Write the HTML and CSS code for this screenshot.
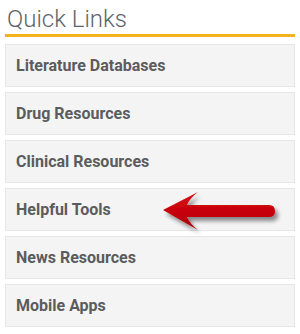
FILE: index.html
```html
<!DOCTYPE html>
<html>
<head>
<meta charset="utf-8">
<link rel="stylesheet" href="styles.css">
</head>
<body>
<div class="panel">
  <h2 class="title">Quick Links</h2>
  <ul class="links">
    <li class="link">Literature Databases</li>
    <li class="link">Drug Resources</li>
    <li class="link">Clinical Resources</li>
    <li class="link has-arrow">Helpful Tools
      <svg class="arrow" width="130" height="52" viewBox="0 0 130 52">
        <defs>
          <linearGradient id="g" x1="0" y1="0" x2="0" y2="1">
            <stop offset="0" stop-color="#d8121a"/>
            <stop offset="0.6" stop-color="#c40008"/>
            <stop offset="1" stop-color="#9e0006"/>
          </linearGradient>
          <filter id="s" x="-20%" y="-40%" width="140%" height="180%">
            <feGaussianBlur in="SourceAlpha" stdDeviation="2"/>
            <feOffset dx="3" dy="4"/>
            <feComponentTransfer><feFuncA type="linear" slope="0.45"/></feComponentTransfer>
            <feMerge><feMergeNode/><feMergeNode in="SourceGraphic"/></feMerge>
          </filter>
        </defs>
        <path filter="url(#s)" fill="url(#g)" d="M7 23 L42 5 Q34 11 31 18 L113 18 Q119 18 119 24 Q119 30 113 30 L31 30 Q34 37 42 43 Z"/>
      </svg>
    </li>
    <li class="link">News Resources</li>
    <li class="link">Mobile Apps</li>
  </ul>
</div>
</body>
</html>
```
FILE: styles.css
```css
html, body {
  margin: 0;
  padding: 0;
  background: #ffffff;
}
.panel {
  width: 290px;
  padding: 0 5px;
  font-family: Roboto, "Liberation Sans", sans-serif;
}
.title {
  margin: 0;
  padding: 7px 0 3px 2px;
  font-weight: 300;
  font-size: 24px;
  line-height: 24px;
  color: #5f6468;
  border-bottom: 3px solid #f5b11c;
}
.links {
  list-style: none;
  margin: 7px 0 0;
  padding: 0;
  display: flex;
  flex-direction: column;
  gap: 5px;
}
.link {
  position: relative;
  box-sizing: border-box;
  height: 43px;
  display: flex;
  align-items: center;
  padding-left: 10px;
  background: #f4f4f4;
  border: 1px solid #e6e6e6;
  font-size: 16px;
  font-weight: 700;
  color: #5a5c5e;
}
.arrow {
  position: absolute;
  left: 150px;
  top: -2px;
}
```
